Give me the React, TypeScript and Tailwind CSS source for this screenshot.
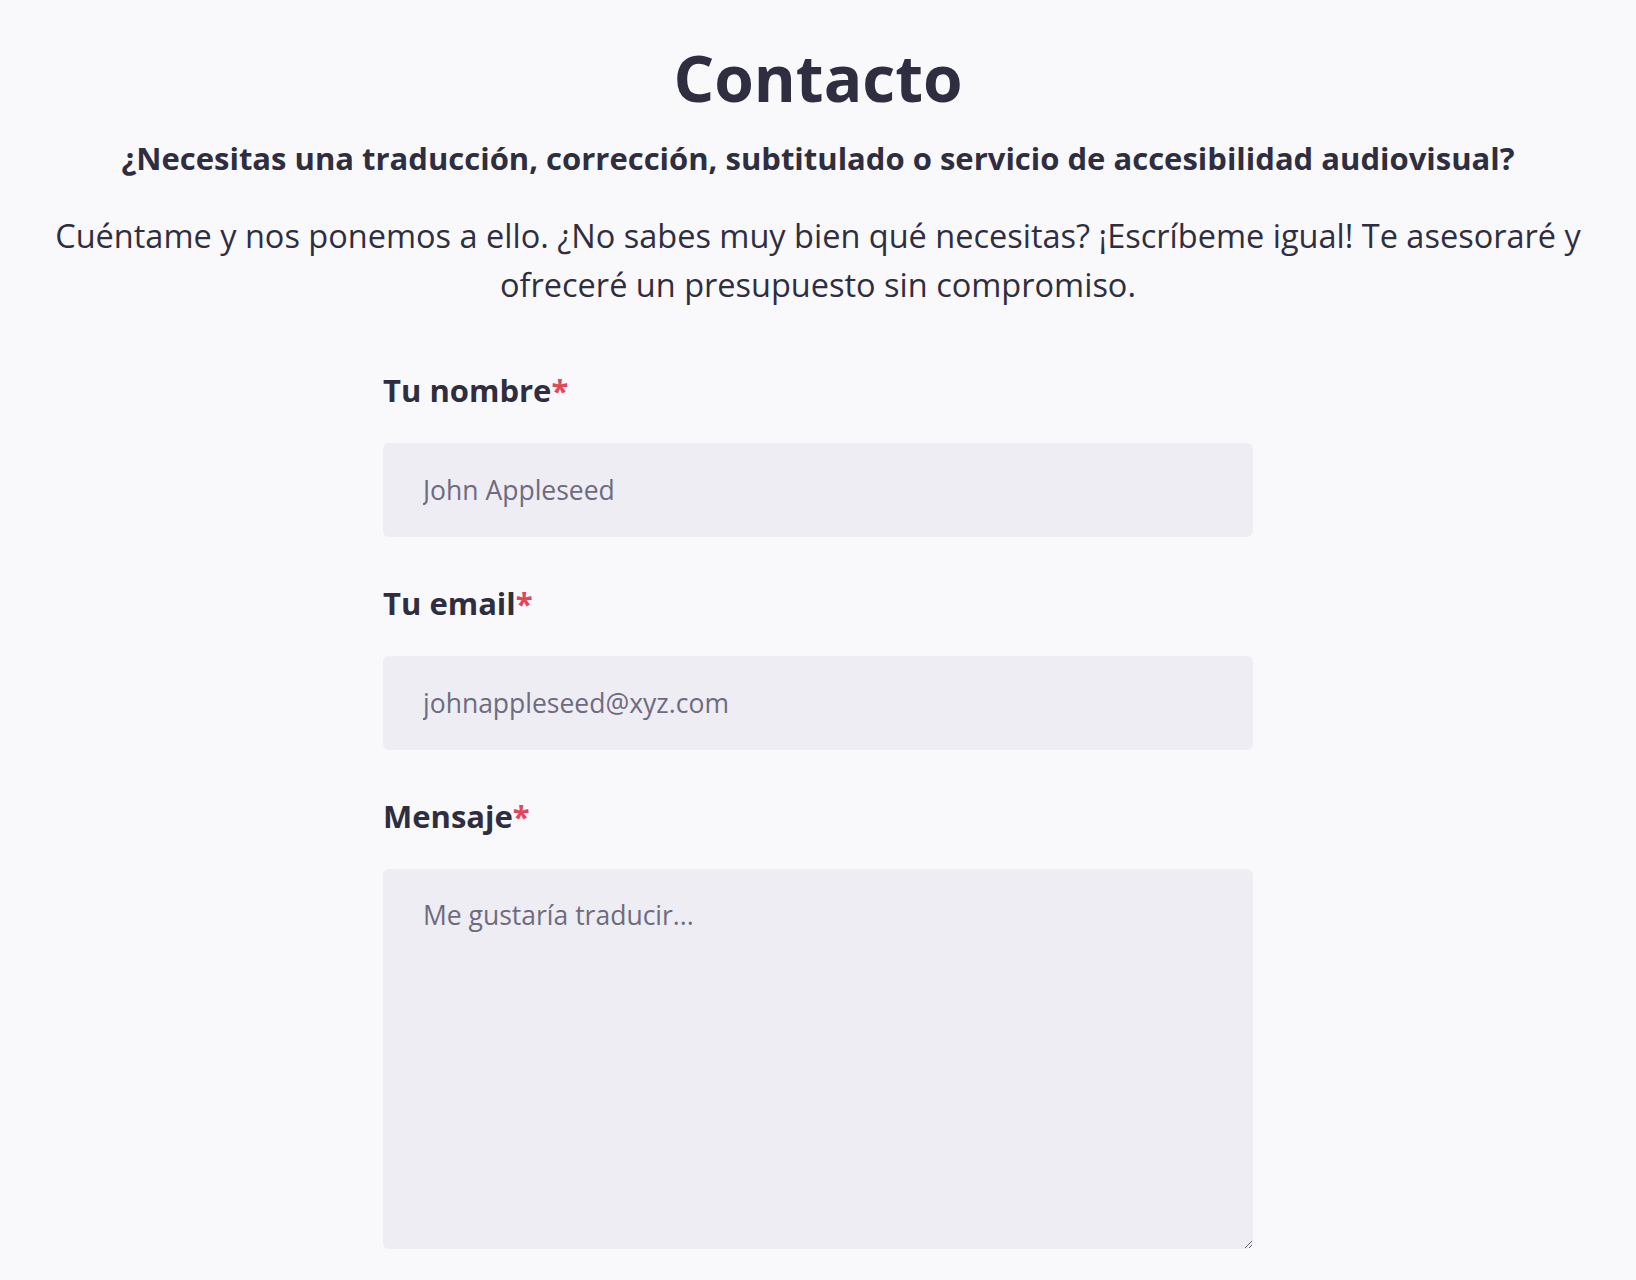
import React from "react";

function Field({
  label,
  placeholder,
  multiline,
}: {
  label: string;
  placeholder: string;
  multiline?: boolean;
}) {
  return (
    <div className="flex flex-col">
      <label className="text-[31px] font-bold leading-[40px] text-[#2f2e41]">
        {label}
        <span className="text-[#e2465a]">*</span>
      </label>
      {multiline ? (
        <textarea
          placeholder={placeholder}
          className="mt-[33px] h-[380px] w-full resize-y rounded-[6px] bg-[#eeedf3] px-[40px] py-[27px] text-[26.5px] text-[#2f2e41] outline-none placeholder:text-[#6e6b80]"
        />
      ) : (
        <input
          placeholder={placeholder}
          className="mt-[33px] h-[94px] w-full rounded-[6px] bg-[#eeedf3] px-[40px] text-[26.5px] text-[#2f2e41] outline-none placeholder:text-[#6e6b80]"
        />
      )}
    </div>
  );
}

export default function App() {
  return (
    <div
      className="min-h-screen bg-[#f9f9fb] text-[#2f2e41]"
      style={{ fontFamily: "'Open Sans', 'Noto Sans', sans-serif" }}
    >
      <div className="flex flex-col items-center px-[40px] pt-[38px] text-center">
        <h1 className="text-[64px] font-bold leading-[80px]">Contacto</h1>
        <h2 className="mt-[20px] text-[31px] font-bold leading-[40px]">
          ¿Necesitas una traducción, corrección, subtitulado o servicio de accesibilidad audiovisual?
        </h2>
        <p className="mt-[33px] text-[32.5px] leading-[49px]">
          Cuéntame y nos ponemos a ello. ¿No sabes muy bien qué necesitas? ¡Escríbeme igual! Te asesoraré y
          ofreceré un presupuesto sin compromiso.
        </p>
      </div>
      <form className="mx-auto mt-[61px] flex w-[870px] flex-col gap-[46px] pb-[40px]">
        <Field label="Tu nombre" placeholder="John Appleseed" />
        <Field label="Tu email" placeholder="johnappleseed@xyz.com" />
        <Field label="Mensaje" placeholder="Me gustaría traducir..." multiline />
      </form>
    </div>
  );
}
